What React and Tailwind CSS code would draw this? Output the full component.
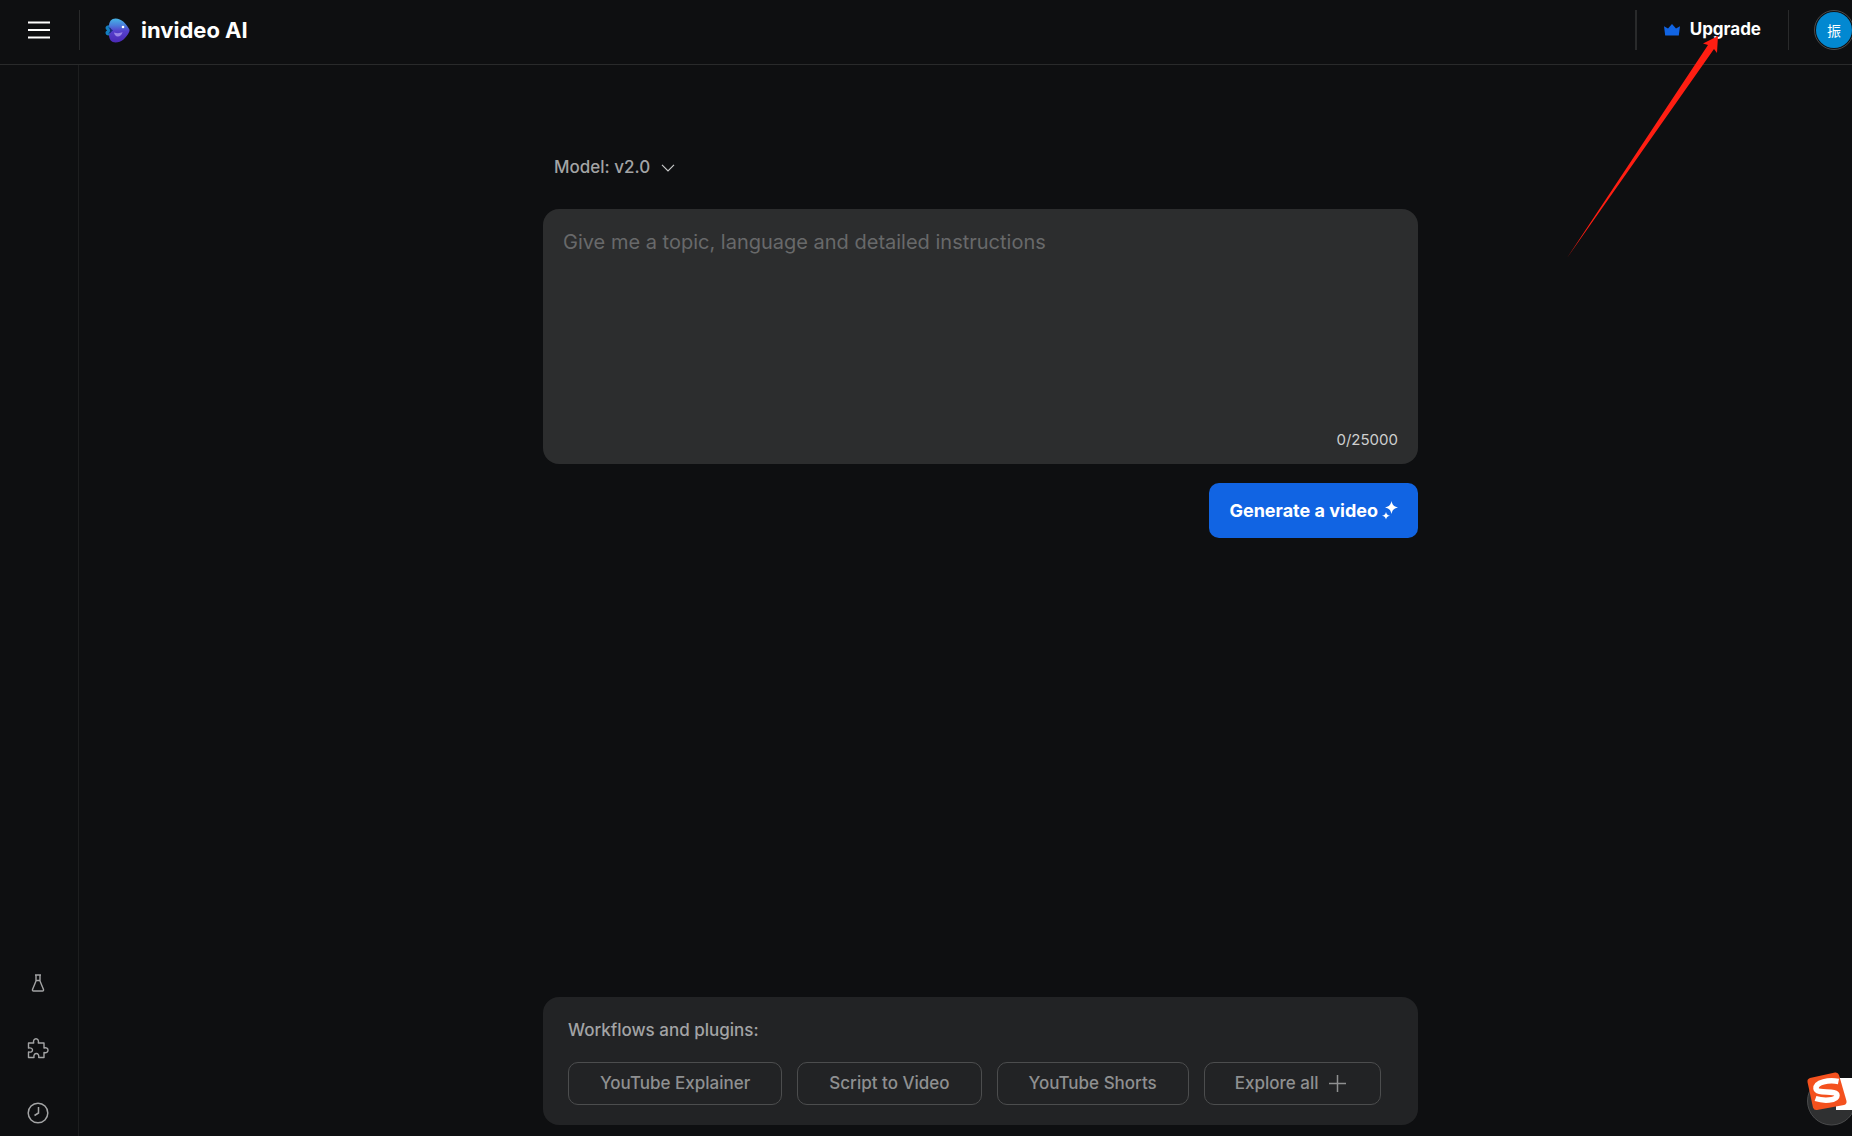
const workflows = ['YouTube Explainer', 'Script to Video', 'YouTube Shorts'];

const Logo = () => (
  <svg className="w-[25px] h-[25px]" viewBox="0 0 25 25" fill="none" aria-hidden="true">
    <defs>
      <linearGradient id="fish-body" x1="12" y1="0" x2="12" y2="25" gradientUnits="userSpaceOnUse">
        <stop stopColor="#46b8e6" />
        <stop offset="0.28" stopColor="#4a7fdc" />
        <stop offset="0.52" stopColor="#5540cc" />
        <stop offset="1" stopColor="#4a28b4" />
      </linearGradient>
    </defs>
    <path d="M5 7.5C3.5 6.8 1 7.600 .6 9.300C.3 10.800 1.200 11.800 2.200 12.300C.8 13 .2 14.300 .7 15.800C1.300 17.500 3.500 17.700 5 17Z" fill="#137fc0" />
    <path d="M4 8C4 3.500 6.500 .5 10.500 .5C16.500 .5 21.500 6 24 10.800C24.700 12 24.700 13 24 14.200C21.500 19.500 16.500 24.500 10.500 24.500C6.500 24.500 4 21.500 4 17C6 15 6.500 10.500 4 8Z" fill="url(#fish-body)" />
    <path d="M3 8.500L8 12.500L3 16.500L5.500 12.500Z" fill="#172f7c" />
    <circle cx="18" cy="9" r="1.300" fill="#fff" />
    <path d="M9 14.500C12 15.500 15.500 15.300 17.500 14C17 16.800 15 18.500 12.800 18.500C10.800 18.500 9.200 16.800 9 14.500Z" fill="#9a86e6" />
  </svg>
);

const MenuLines = () => (
  <svg className="w-[22px] h-[18px]" viewBox="0 0 22 18" stroke="currentColor" strokeWidth="2" aria-hidden="true">
    <path d="M0 1.500H22M0 9H22M0 16.500H22" />
  </svg>
);

const Crown = () => (
  <svg className="w-4 h-3" viewBox="0 0 16 12" fill="#1164e3" aria-hidden="true">
    <path d="M0 2.200L4 4.500L8 0L12 4.500L16 2.200L14.800 11.500H1.200Z" />
  </svg>
);

const Chevron = () => (
  <svg className="w-[14px] h-2" viewBox="0 0 14 8" fill="none" stroke="currentColor" strokeWidth="1.2" aria-hidden="true">
    <path d="M1 .8L7 6.800L13 .8" />
  </svg>
);

const Plus = () => (
  <svg className="w-[17px] h-[17px]" viewBox="0 0 17 17" fill="none" stroke="currentColor" strokeWidth="1.5" aria-hidden="true">
    <path d="M8.500 0V17M0 8.500H17" />
  </svg>
);

const Sparkles = () => (
  <svg className="w-4 h-5" viewBox="0 0 16 20" fill="#fff" aria-hidden="true">
    <path d="M9.500 0C10.500 4 11.500 5.300 16 6.500C11.500 7.700 10.500 9 9.500 13C8.500 9 7.500 7.700 3 6.500C7.500 5.300 8.500 4 9.500 0Z" />
    <path d="M4 11C4.700 13.300 5.200 14.100 8 14.800C5.200 15.500 4.700 16.300 4 18.600C3.300 16.300 2.800 15.500 0 14.800C2.800 14.100 3.300 13.300 4 11Z" />
  </svg>
);

const Flask = () => (
  <svg className="w-[22px] h-[22px]" viewBox="0 0 22 22" fill="none" stroke="currentColor" strokeWidth="1.4" strokeLinejoin="round" aria-hidden="true">
    <path d="M8 3H14M9 3V9L5.500 17.500Q5.200 19 6.500 19H15.500Q16.800 19 16.500 17.500L13 9V3M9 8.500H13" />
  </svg>
);

const Puzzle = () => (
  <svg className="w-[22px] h-[22px]" viewBox="0 0 22 22" fill="none" stroke="currentColor" strokeWidth="1.4" strokeLinejoin="round" aria-hidden="true">
    <path d="M1.500 6H6.700C6 3.500 7.300 1.700 9 1.700S12 3.500 11.300 6H17V11C19.300 10.300 21 11.500 21 13.300S19.300 16.200 17 15.500V20.500H11.700C12.200 18 11 16.500 9.300 16.500S6.500 18 7 20.500H1.500V15C4 15.600 5.500 14.500 5.500 13S4 10.500 1.500 11Z" />
  </svg>
);

const Clock = () => (
  <svg className="w-[22px] h-[22px]" viewBox="0 0 22 22" fill="none" stroke="currentColor" strokeWidth="1.5" aria-hidden="true">
    <circle cx="11" cy="11" r="9.800" />
    <path d="M11.500 5V11L7.500 13.500" />
  </svg>
);

const InputMethodBadge = () => (
  <svg className="absolute right-0 bottom-[10px] w-[46px] h-[54px]" viewBox="0 0 46 54" aria-hidden="true">
    <circle cx="25.500" cy="29" r="24" fill="#2f3031" stroke="#4a4b4c" />
    <rect x="30" y="6" width="16" height="32" fill="#fff" />
    <path d="M4 6L29 .5Q32 0 33 3L40.500 29Q41 32 38 33L11 38Q8 38.500 7 35.500L1.500 10Q1 7 4 6Z" fill="#f4511e" />
    <path d="M32.500 9.500C23 7.500 9.500 10 10 16.500C10.500 22.500 31 17.500 31 23.500C31 29 17 29 9.500 26.500" fill="none" stroke="#fff" strokeWidth="5.500" />
  </svg>
);

const Arrow = () => (
  <svg className="absolute right-[133px] top-9 w-[152px] h-[222px] pointer-events-none" viewBox="0 0 152 222" aria-hidden="true">
    <path d="M0 222L141 9L136 7.500L151 0L150 17L147 13Z" fill="#ff1e12" />
  </svg>
);

const Header = () => (
  <header className="flex items-center h-[65px] pb-1 shrink-0 border-b border-[#292a2b]">
    <button type="button" aria-label="Open menu" className="flex justify-center w-[79px] h-10 items-center pr-px text-white">
      <MenuLines />
    </button>
    <div className="w-px h-10 bg-[#292a2b]" />
    <a href="#" className="flex items-center gap-[11px] ml-[25px] text-[22px] font-bold text-white">
      <Logo />
      invideo AI
    </a>
    <div className="flex items-center ml-auto h-10">
      <div className="w-0.5 h-10 bg-[#292a2b]" />
      <button type="button" className="flex items-center gap-[10px] px-[27px] text-[17px] font-bold text-white">
        <Crown />
        Upgrade
      </button>
      <div className="w-px h-10 bg-[#292a2b]" />
      <button type="button" aria-label="Account" className="flex items-center justify-center w-10 h-10 ml-[25px] -mr-0.5 rounded-full border border-[#4a4b4c] shrink-0">
        <span className="flex items-center justify-center w-9 h-9 rounded-full bg-[#0288d1] text-sm leading-none text-white font-['Noto_Sans_CJK_SC',sans-serif]">振</span>
      </button>
    </div>
  </header>
);

const Sidebar = () => (
  <nav className="flex flex-col justify-end items-center gap-[43px] w-[79px] pb-3 pr-0.5 shrink-0 border-r border-[#1d1e1f] text-[#a3a4a5]">
    <button type="button" aria-label="Labs"><Flask /></button>
    <button type="button" aria-label="Plugins"><Puzzle /></button>
    <button type="button" aria-label="History"><Clock /></button>
  </nav>
);

const App = () => {
  return (
    <div className="relative flex flex-col min-h-screen overflow-hidden bg-[#0e0f11] font-['Inter',sans-serif]">
      <Header />
      <div className="flex flex-1">
        <Sidebar />
        <main className="flex flex-col flex-1 items-center pl-[30px] pb-[11px]">
          <form className="w-full max-w-[875px] mt-[87px]">
            <div className="flex items-center gap-[10px] pl-[11px] h-8">
              <select aria-label="Model" className="appearance-none bg-transparent text-[17px] font-medium text-[#a3a4a5]">
                <option>Model: v2.0</option>
              </select>
              <span className="text-[#c9caca]"><Chevron /></span>
            </div>
            <div className="mt-[25px] px-5 pt-[19px] pb-3 rounded-2xl bg-[#2c2d2e]">
              <textarea
                aria-label="Prompt"
                placeholder="Give me a topic, language and detailed instructions"
                className="block w-full h-[200px] resize-none bg-transparent text-xl leading-7 text-white placeholder:text-[#68696a] outline-none"
              />
              <p className="text-right text-[15px] leading-6 text-[#cfd0d0]">0/25000</p>
            </div>
            <button type="submit" className="flex items-center gap-1 h-[55px] mt-[19px] ml-auto px-5 rounded-[10px] bg-[#1164e3] text-lg font-bold text-white">
              Generate a video
              <Sparkles />
            </button>
          </form>

          {/* Workflows */}
          <section className="w-full max-w-[875px] mt-auto px-[25px] pt-[19px] pb-5 rounded-2xl bg-[#222325]">
            <h2 className="text-[17px] leading-7 font-medium text-[#a3a4a5]">Workflows and plugins:</h2>
            <div className="flex gap-[15px] mt-[18px] text-[17px] font-medium text-[#8f9091] whitespace-nowrap">
              {workflows.map((name) => (
                <button key={name} type="button" className="h-[43px] px-[31px] rounded-[10px] border border-[#4c4d4e]">
                  {name}
                </button>
              ))}
              <button type="button" className="flex items-center gap-[10px] h-[43px] pl-[30px] pr-[34px] rounded-[10px] border border-[#4c4d4e]">
                Explore all
                <Plus />
              </button>
            </div>
          </section>
        </main>
      </div>
      <Arrow />
      <InputMethodBadge />
    </div>
  );
};

export default App;
